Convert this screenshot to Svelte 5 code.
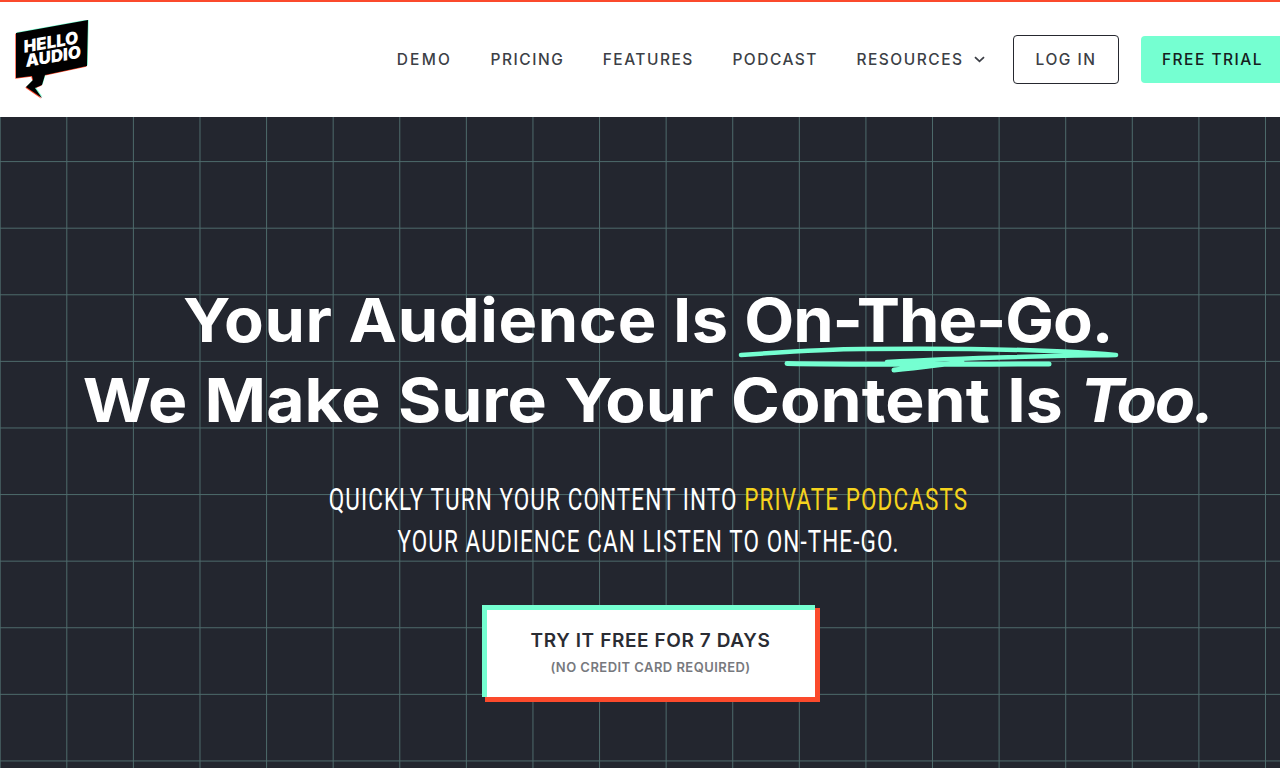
<script>
  const links = ['DEMO', 'PRICING', 'FEATURES', 'PODCAST'];
  const bubble = 'M1 13 73 0 72 46 30 55 27 65 20 68 27 78 11 67 18 60 17 56 1 58Z';
</script>

<div class="page">
  <header class="header">
    <a class="logo" href="#top" aria-label="Hello Audio">
      <svg width="74" height="80" viewBox="0 0 74 80">
        <path class="sh-r" d={bubble} transform="translate(-.7 .8)" />
        <path class="sh-t" d={bubble} transform="translate(.7 -.7)" />
        <path class="bk" d={bubble} />
        <g transform="rotate(-9.8 37 30)" class="lt">
          <text x="37" y="28" text-anchor="middle">HELLO</text>
          <text x="37" y="42.5" text-anchor="middle">AUDIO</text>
        </g>
      </svg>
    </a>
    <nav class="nav">
      {#each links as link}
        <a class="link" href="#top">{link}</a>
      {/each}
      <a class="link res" href="#top">RESOURCES
        <svg width="11" height="7" viewBox="0 0 11 7"><path d="M1 1.2 5.5 5.3 10 1.2" fill="none" stroke="#3c3f46" stroke-width="1.8" /></svg>
      </a>
      <a class="btn login" href="#top">LOG IN</a>
      <a class="btn trial" href="#top">FREE TRIAL</a>
    </nav>
  </header>

  <main class="hero">
    <h1>
      <span class="line">
        <span class="txt one"><span class="lead">Your Audience Is</span> <span class="mark">On-The-Go.</span></span>
        <svg class="squiggle" width="384" height="30" viewBox="0 0 384 30"><path d="M4 10C60 6 110 4 125 4 220 3 320 5 379 10 320 11 230 12 150 17" fill="none" stroke="#75ffd1" stroke-width="4.5" stroke-linecap="round" stroke-linejoin="round" /><path d="M50 18.5C120 20 250 19 312 19M157 25C180 23 200 20 225 17" fill="none" stroke="#75ffd1" stroke-width="5" stroke-linecap="round" /></svg>
      </span>
      <span class="line"><span class="txt two">We Make Sure Your Content Is <em>Too.</em></span></span>
    </h1>
    <p class="sub">
      <span class="subline">QUICKLY TURN YOUR CONTENT INTO <b>PRIVATE PODCASTS</b></span>
      <span class="subline">YOUR AUDIENCE CAN LISTEN TO ON-THE-GO.</span>
    </p>
    <a class="cta" href="#top">
      <span class="cta-main">TRY IT FREE FOR 7 DAYS</span>
      <span class="cta-note">(NO CREDIT CARD REQUIRED)</span>
    </a>
  </main>
</div>

<style>
  :global(body) { margin: 0; overflow: hidden; background: #23262f; }
  .page { height: 768px; display: flex; flex-direction: column; font-family: Inter, "Liberation Sans", sans-serif; }
  a { text-decoration: none; }
  .header { box-sizing: border-box; height: 117px; border-top: 2px solid #fb4a2c; background: #fff; display: flex; justify-content: space-between; padding: 18px 0 0 15px; }
  .logo { display: block; height: 80px; }
  .sh-r { fill: #ff4a2c; }
  .sh-t { fill: #75ffd1; }
  .bk { fill: #000; }
  .lt text { font: italic 900 17px Inter, sans-serif; fill: #fff; }
  .nav { display: flex; align-items: center; height: 82px; margin-top: -2px; margin-right: -4px; }
  .link { color: #3c3f46; font-size: 15.5px; font-weight: 500; letter-spacing: 1.5px; margin-right: 38.5px; white-space: nowrap; }
  .link:first-child { letter-spacing: 2.2px; }
  .res { display: flex; align-items: center; gap: 10px; margin-right: 28.5px; }
  .btn { box-sizing: border-box; display: flex; align-items: center; justify-content: center; font-size: 15.5px; font-weight: 500; letter-spacing: 1.5px; }
  .login { width: 106px; height: 49px; border: 1.5px solid #26282f; border-radius: 4px; color: #3c3f46; margin-right: 22px; }
  .trial { width: 143px; height: 47px; background: #75ffd1; border-radius: 4px; color: #15201d; }
  .hero { flex: 1; display: flex; flex-direction: column; align-items: center; padding: 163px 0 0 16px; box-sizing: border-box; background-color: #23262f; background-image: linear-gradient(to right, #4d6a6b 1px, transparent 1px), linear-gradient(to bottom, #4d6a6b 1px, transparent 1px); background-size: 66.6px 66.6px; background-position: -0.3px -22.5px; }
  h1 { margin: 0; color: #fff; font-size: 61px; font-weight: 700; line-height: 80px; text-align: center; white-space: nowrap; }
  .line { display: block; position: relative; }
  .txt { display: inline-block; }
  .one { transform: scaleX(1.064); }
  .two { transform: scaleX(1.083); word-spacing: 1.5px; }
  .lead { letter-spacing: .6px; }
  .mark { letter-spacing: -1px; }
  .squiggle { position: absolute; left: 611px; top: 65px; }
  em { font-style: italic; letter-spacing: -2.2px; }
  .sub { margin: 39px 0 0; color: #fff; font-family: Roboto, "Liberation Sans", sans-serif; font-size: 31px; line-height: 42px; letter-spacing: 1.5px; text-align: center; white-space: nowrap; transform: scaleX(.726); }
  .subline { display: block; }
  b { color: #f5d31d; font-weight: 400; }
  .cta { box-sizing: border-box; margin-top: 42px; padding-bottom: 4px; width: 333px; height: 92px; background: #fff; border-top: 5px solid #75ffd1; border-left: 5px solid #75ffd1; box-shadow: 4px 4px 0 1px #fb4a2c; display: flex; flex-direction: column; align-items: center; justify-content: center; }
  .cta-main { color: #2a2c33; font-size: 19px; font-weight: 600; letter-spacing: .6px; }
  .cta-note { color: #77797e; font-size: 13px; font-weight: 600; letter-spacing: .45px; margin-top: 7px; }
</style>
